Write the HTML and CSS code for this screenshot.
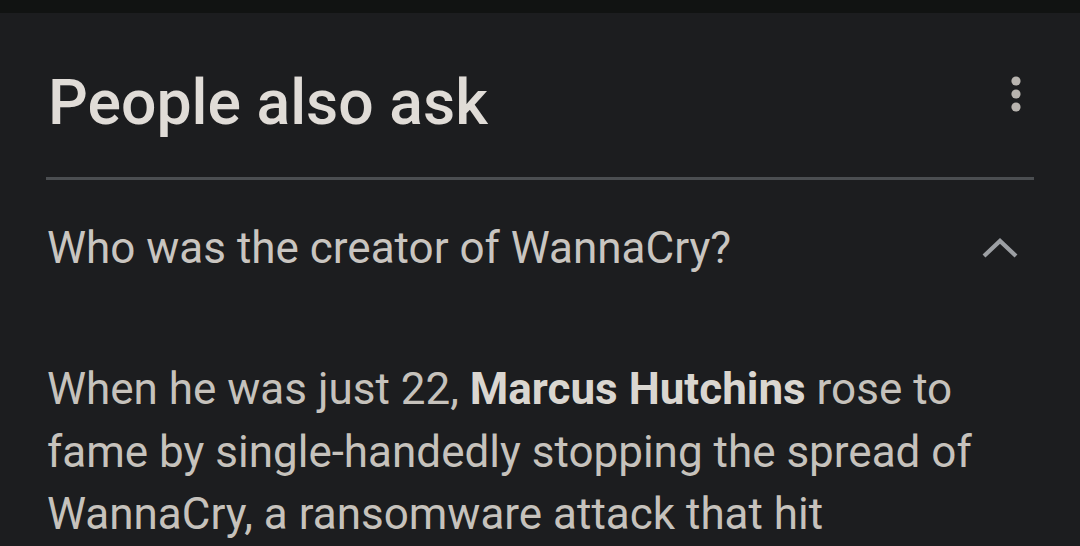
FILE: index.html
```html
<!DOCTYPE html>
<html lang="en">
<head>
    <meta charset="UTF-8">
    <meta name="viewport" content="width=device-width, initial-scale=1.0">
    <title>People also ask</title>
    <link rel="stylesheet" href="styles.css">
</head>
<body>
    <div class="status-bar"></div>
    <section class="paa">
        <div class="paa-head">
            <h2>People also ask</h2>
            <span class="paa-more" aria-label="More options">
                <svg width="12" height="38" viewBox="0 0 12 38">
                    <circle cx="6" cy="5" r="4.6"/>
                    <circle cx="6" cy="18" r="4.6"/>
                    <circle cx="6" cy="31" r="4.6"/>
                </svg>
            </span>
        </div>
        <div class="paa-item">
            <div class="paa-question">
                <span>Who was the creator of WannaCry?</span>
                <svg class="paa-chevron" width="36" height="22" viewBox="0 0 36 22">
                    <path d="M2 19 L18 4 L34 19" fill="none" stroke-width="4.2"/>
                </svg>
            </div>
            <p class="paa-answer">When he was just 22, <b>Marcus Hutchins</b> rose to fame by single-handedly stopping the spread of WannaCry, a ransomware attack that hit hundreds of thousands of computers worldwide.</p>
        </div>
    </section>
</body>
</html>
```

FILE: styles.css
```css
*,*::before,*::after{
    padding: 0;
    margin: 0;
    box-sizing: border-box;
}
body{
    background-color: #1c1d1f;
    font-family: Roboto, "Noto Sans", sans-serif;
    overflow: hidden;
}
.status-bar{
    height: 13px;
    background-color: #111312;
}
.paa{
    padding: 0 46px;
}
.paa-head{
    display: flex;
    justify-content: space-between;
    align-items: flex-start;
    padding-top: 52px;
    padding-bottom: 36px;
    border-bottom: 3px solid #4b4e51;
}
.paa-head h2{
    font-size: 62.5px;
    font-weight: 500;
    line-height: 76px;
    color: #e0dcd7;
    padding-left: 2px;
}
.paa-more{
    display: flex;
    padding-top: 11px;
    margin-right: 12px;
}
.paa-more svg{
    fill: #b8b4af;
}
.paa-question{
    display: flex;
    justify-content: space-between;
    align-items: center;
    padding-top: 40px;
    font-size: 44px;
    line-height: 56px;
    color: #c9c5c0;
    padding-left: 1px;
}
.paa-chevron{
    stroke: #9c9fa3;
    margin-right: 16px;
}
.paa-answer{
    padding-top: 82px;
    padding-right: 40px;
    font-size: 44px;
    line-height: 62.5px;
    color: #c6c2bc;
    padding-left: 1px;
}
.paa-answer b{
    font-weight: 700;
    color: #dad6d0;
}
```
